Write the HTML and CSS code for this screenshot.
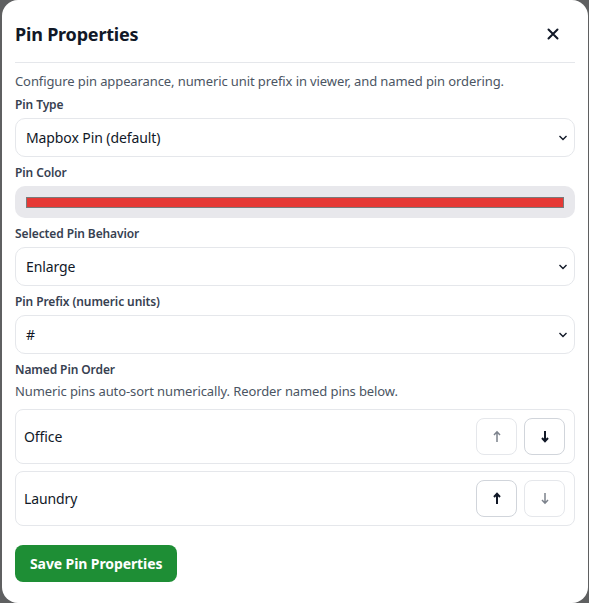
FILE: index.html
```html
<!DOCTYPE html>
<html lang="en">
<head>
<meta charset="utf-8">
<title>Pin Properties</title>
<link rel="stylesheet" href="styles.css">
</head>
<body>
<div class="modal">
  <div class="header">
    <h2 class="title">Pin Properties</h2>
    <button class="close" aria-label="Close">
      <svg width="12" height="12" viewBox="0 0 12 12"><path d="M1.5 1.5 L10.5 10.5 M10.5 1.5 L1.5 10.5" stroke="#111827" stroke-width="2" stroke-linecap="round"/></svg>
    </button>
  </div>
  <div class="body">
    <p class="desc">Configure pin appearance, numeric unit prefix in viewer, and named pin ordering.</p>

    <div class="field">
      <div class="label">Pin Type</div>
      <div class="select"><span>Mapbox Pin (default)</span><svg class="chev" width="10" height="6" viewBox="0 0 10 6"><path d="M1.5 1 L5 4.5 L8.5 1" fill="none" stroke="#111827" stroke-width="1.4"/></svg></div>
    </div>

    <div class="field">
      <div class="label">Pin Color</div>
      <div class="color"><div class="swatch"></div></div>
    </div>

    <div class="field">
      <div class="label">Selected Pin Behavior</div>
      <div class="select"><span>Enlarge</span><svg class="chev" width="10" height="6" viewBox="0 0 10 6"><path d="M1.5 1 L5 4.5 L8.5 1" fill="none" stroke="#111827" stroke-width="1.4"/></svg></div>
    </div>

    <div class="field">
      <div class="label">Pin Prefix (numeric units)</div>
      <div class="select"><span>#</span><svg class="chev" width="10" height="6" viewBox="0 0 10 6"><path d="M1.5 1 L5 4.5 L8.5 1" fill="none" stroke="#111827" stroke-width="1.4"/></svg></div>
    </div>

    <div class="field">
      <div class="label">Named Pin Order</div>
      <p class="hint">Numeric pins auto-sort numerically. Reorder named pins below.</p>
      <div class="rows">
        <div class="row">
          <span class="name">Office</span>
          <div class="btns">
            <button class="mv off" aria-label="Move up"><svg width="10" height="13" viewBox="0 0 10 13"><path d="M5 12 V2 M2 5 L5 1.8 L8 5" fill="none" stroke="currentColor" stroke-width="1.5"/></svg></button>
            <button class="mv" aria-label="Move down"><svg width="10" height="13" viewBox="0 0 10 13"><path d="M5 1 V11 M2 8 L5 11.2 L8 8" fill="none" stroke="currentColor" stroke-width="2"/></svg></button>
          </div>
        </div>
        <div class="row">
          <span class="name">Laundry</span>
          <div class="btns">
            <button class="mv" aria-label="Move up"><svg width="10" height="13" viewBox="0 0 10 13"><path d="M5 12 V2 M2 5 L5 1.8 L8 5" fill="none" stroke="currentColor" stroke-width="2"/></svg></button>
            <button class="mv off" aria-label="Move down"><svg width="10" height="13" viewBox="0 0 10 13"><path d="M5 1 V11 M2 8 L5 11.2 L8 8" fill="none" stroke="currentColor" stroke-width="1.5"/></svg></button>
          </div>
        </div>
      </div>
    </div>

    <button class="save">Save Pin Properties</button>
  </div>
</div>
</body>
</html>
```

FILE: styles.css
```css
* { box-sizing: border-box; }
html, body { margin: 0; padding: 0; }
body {
  background: #5f6061;
  font-family: "Noto Sans", "Open Sans", sans-serif;
  letter-spacing: -0.1px;
  color: #111827;
  width: 589px;
  height: 603px;
  overflow: hidden;
  padding-left: 2px;
}
.modal {
  width: 586px;
  height: 603px;
  background: #ffffff;
  border-radius: 16px;
  padding: 0 13px;
}
.header {
  display: flex;
  align-items: center;
  justify-content: space-between;
  padding: 22px 0 16px;
  border-bottom: 1px solid #e5e7eb;
}
.title {
  margin: 0;
  font-size: 18px;
  line-height: 24px;
  font-weight: 700;
  letter-spacing: -0.2px;
  color: #111827;
}
.close {
  border: 0;
  background: transparent;
  padding: 0;
  width: 24px;
  height: 24px;
  display: flex;
  align-items: center;
  justify-content: center;
  margin-right: 10px;
}
.body { padding-top: 9px; }
.desc {
  margin: 0 0 7px;
  font-size: 13px;
  line-height: 18px;
  color: #4b5563;
}
.field { margin-bottom: 8px; }
.label {
  font-size: 12px;
  line-height: 16px;
  font-weight: 600;
  color: #374151;
  margin-bottom: 5px;
}
.select {
  height: 39px;
  border: 1px solid #e5e7eb;
  border-radius: 10px;
  display: flex;
  align-items: center;
  justify-content: space-between;
  padding: 0 6px 0 10px;
  font-size: 14px;
  color: #111827;
}
.color {
  height: 32px;
  background: #e8e8ec;
  border-radius: 10px;
  display: flex;
  align-items: center;
  padding: 0 11px;
}
.swatch {
  flex: 1;
  height: 11px;
  background: #e53935;
  border: 1px solid #7a7a7a;
}
.hint {
  margin: -1px 0 9px;
  font-size: 13px;
  line-height: 18px;
  color: #4b5563;
}
.rows { display: flex; flex-direction: column; gap: 7px; }
.row {
  height: 55px;
  border: 1px solid #e5e7eb;
  border-radius: 8px;
  display: flex;
  align-items: center;
  justify-content: space-between;
  padding: 0 9px 0 8px;
}
.name { font-size: 14px; color: #111827; }
.btns { display: flex; gap: 7px; }
.mv {
  width: 41px;
  height: 37px;
  border: 1px solid #d1d5db;
  border-radius: 8px;
  background: #ffffff;
  color: #111827;
  display: flex;
  align-items: center;
  justify-content: center;
  padding: 0;
}
.mv.off { border-color: #e5e7eb; color: #7c828c; }
.save {
  margin-top: 11px;
  height: 37px;
  padding: 0 15px;
  border: 0;
  border-radius: 8px;
  background: #1e8e35;
  color: #ffffff;
  font-family: inherit;
  letter-spacing: inherit;
  font-size: 14px;
  font-weight: 700;
}
```
